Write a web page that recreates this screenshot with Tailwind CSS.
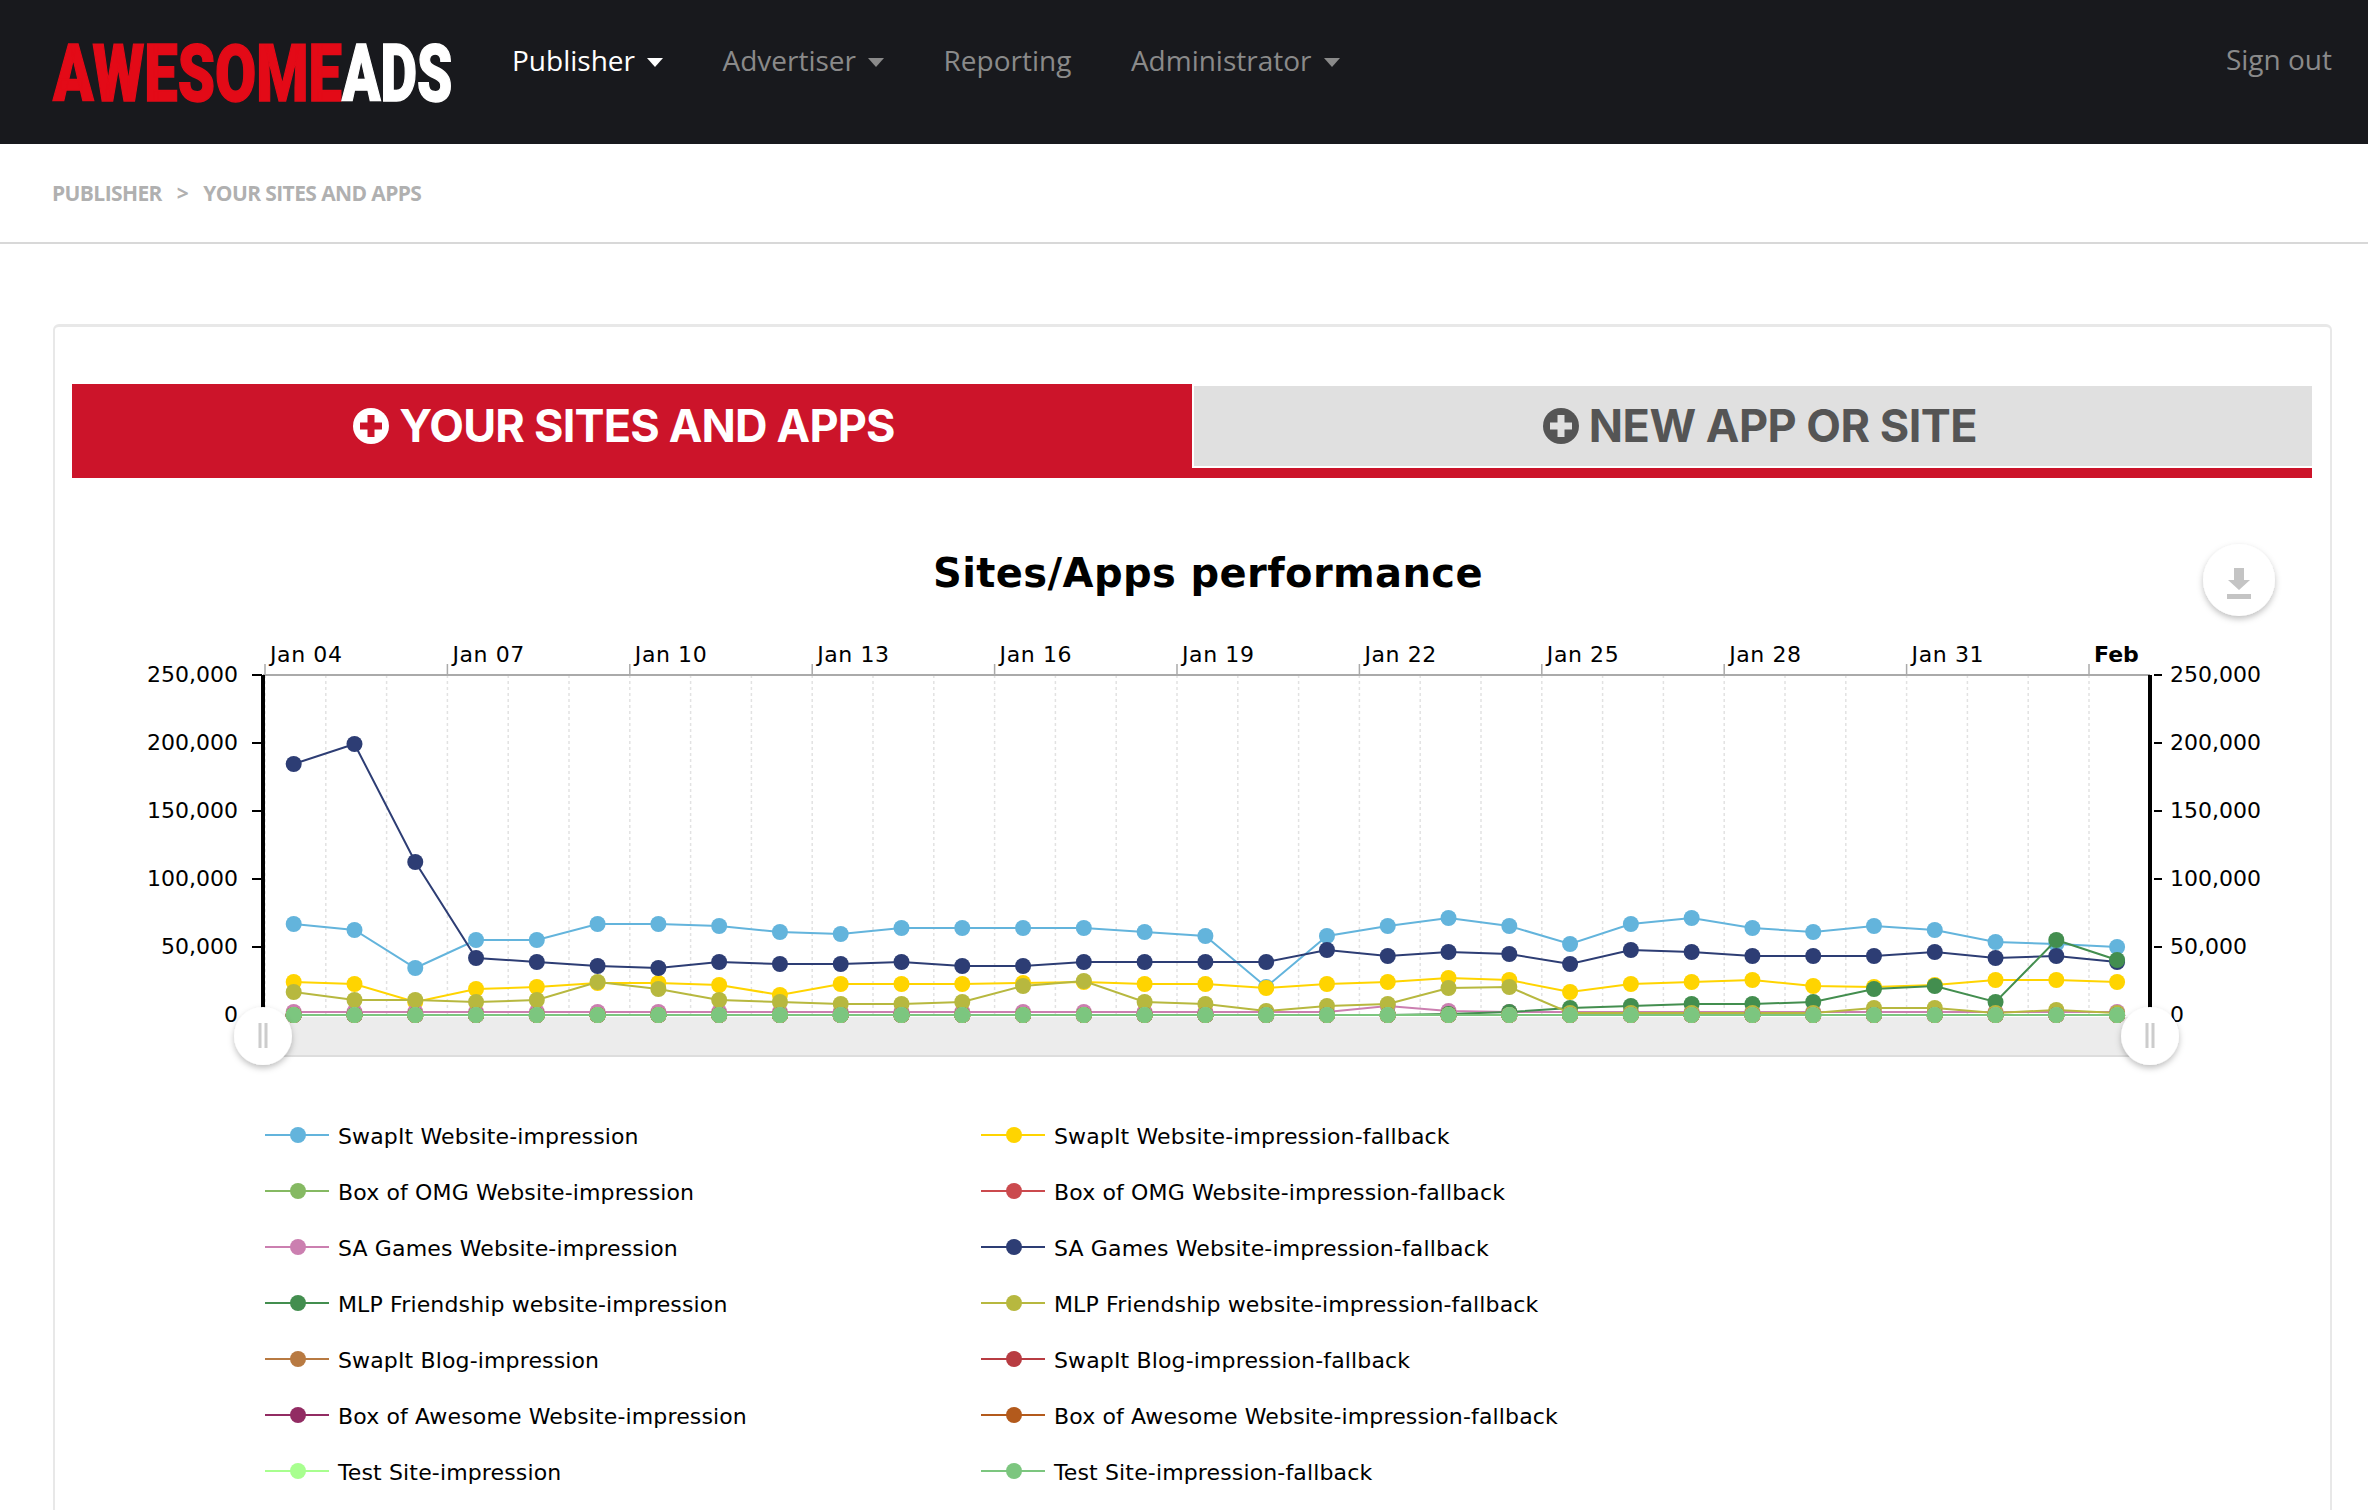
<!DOCTYPE html>
<html lang="en">
<head>
  <meta charset="UTF-8">
  <title>Your sites and apps</title>
  <script src="https://cdn.jsdelivr.net/npm/@tailwindcss/browser@4"></script>
</head>
<body class="bg-white h-[1510px] overflow-hidden font-['Open_Sans',sans-serif]">

  <!-- Top bar -->
  <header class="h-[144px] bg-[#18191d] flex items-start pl-[53px] pr-[36px]">
    <svg class="mt-[44px] w-[400px] h-[58px] shrink-0 overflow-visible" viewBox="0 0 400 58" font-family="Roboto" font-weight="900" font-size="79" stroke-width="1.5">
      <text transform="translate(0 57) scale(0.755 1)" fill="#e30a17" stroke="#e30a17">AWESOME</text>
      <text transform="translate(289 57) scale(0.715 1)" fill="#ffffff" stroke="#ffffff">ADS</text>
    </svg>
    <nav class="ml-[59px] flex gap-[59.5px] mt-[41px] text-[28px] leading-[38px] text-[#8a8a8a]">
      <a class="flex items-center text-white">Publisher<span class="ml-[12px] mt-[4px] border-x-[8px] border-t-[9px] border-x-transparent border-t-white"></span></a>
      <a class="flex items-center">Advertiser<span class="ml-[12px] mt-[4px] border-x-[8px] border-t-[9px] border-x-transparent border-t-[#8a8a8a]"></span></a>
      <a class="flex items-center">Reporting</a>
      <a class="flex items-center">Administrator<span class="ml-[12px] mt-[4px] border-x-[8px] border-t-[9px] border-x-transparent border-t-[#8a8a8a]"></span></a>
    </nav>
    <a class="ml-auto mt-[40px] text-[28px] leading-[38px] text-[#8a8a8a]">Sign out</a>
  </header>

  <!-- Breadcrumb -->
  <div class="h-[100px] border-b-2 border-[#d8d8d8] pl-[52px] pt-[35px] flex items-start gap-[15px] text-[21px] leading-[28px] font-bold tracking-[-0.6px] text-[#b0b0b0]">
    <span>PUBLISHER</span>
    <span>&gt;</span>
    <span>YOUR SITES AND APPS</span>
  </div>

  <!-- Card -->
  <main class="mt-[80px] ml-[53px] w-[2279px] h-[1200px] border-2 border-t-[3px] border-[#e8e8e8] rounded-[6px] pt-[57px] pl-[17px]">
    <div class="w-[2240px] h-[94px] flex items-start border-b-[10px] border-[#cc142a] font-['Inter',sans-serif] font-bold text-[45px]">
      <button class="w-[1120px] h-[84px] pr-[16px] bg-[#cc142a] text-white tracking-[-0.8px] flex items-center justify-center gap-[10px]">
        <svg class="w-[36px] h-[36px]" viewBox="0 0 36 36"><circle cx="18" cy="18" r="18" fill="#ffffff"/><path d="M14.5 7h7v7.5H29v7h-7.5V29h-7v-7.5H7v-7h7.5z" fill="#cc142a"/></svg>
        YOUR SITES AND APPS
      </button>
      <button class="w-[1118px] ml-[2px] mt-[2px] h-[80px] pl-[14px] bg-[#e0e0e0] text-[#555555] tracking-[-0.5px] flex items-center justify-center gap-[10px]">
        <svg class="w-[36px] h-[36px]" viewBox="0 0 36 36"><circle cx="18" cy="18" r="18" fill="#555555"/><path d="M14.5 7h7v7.5H29v7h-7.5V29h-7v-7.5H7v-7h7.5z" fill="#e0e0e0"/></svg>
        NEW APP OR SITE
      </button>
    </div>

    <!-- Chart: the viewBox uses page coordinates -->
    <svg id="chart" class="block" width="2240" height="630" viewBox="72 478 2240 630" font-family="DejaVu Sans" font-size="22">
      <defs>
        <filter id="soft" x="-30%" y="-30%" width="160%" height="170%">
          <feDropShadow dx="0" dy="3" stdDeviation="3" flood-color="#000000" flood-opacity="0.25"/>
        </filter>
      </defs>
      <text x="1208" y="587" text-anchor="middle" font-weight="700" font-size="40" letter-spacing="0.4">Sites/Apps performance</text>
      <circle cx="2239" cy="580" r="36" fill="#ffffff" filter="url(#soft)"/>
      <path d="M2234 568h10v12h6l-11 10-11-10h6zM2227 594h24v5h-24z" fill="#c4c4c4"/>
      <g id="grid"></g>
      <rect x="263" y="1017" width="1887" height="40" fill="#ececec"/>
      <rect x="263" y="1055" width="1887" height="2" fill="#dddddd"/>
      <g id="series"></g>
      <circle cx="263" cy="1036" r="29" fill="#ffffff" filter="url(#soft)"/>
      <path d="M260 1023v25M266 1023v25" stroke="#cccccc" stroke-width="3"/>
      <circle cx="2150" cy="1036" r="29" fill="#ffffff" filter="url(#soft)"/>
      <path d="M2147 1023v25M2153 1023v25" stroke="#cccccc" stroke-width="3"/>
    </svg>

    <!-- Legend -->
    <ul id="legend" class="ml-[193px] grid grid-cols-[716px_716px] auto-rows-[56px] font-['DejaVu_Sans',sans-serif] text-[22px] tracking-[0.14px] text-black"></ul>
  </main>

  <script>
    // y positions on the page for each of the 31 days, legend order
    const flat = y => Array(31).fill(y);
    const seriesList = [
      { name: 'SwapIt Website-impression', color: '#63b4dc', ys: [924,930,968,940,940,924,924,926,932,934,928,928,928,928,932,936,987,936,926,918,926,944,924,918,928,932,926,930,942,944,947] },
      { name: 'SwapIt Website-impression-fallback', color: '#ffd400', ys: [982,984,1002,989,987,983,983,985,995,984,984,984,983,982,984,984,988,984,982,978,980,992,984,982,980,986,987,985,980,980,982] },
      { name: 'Box of OMG Website-impression', color: '#85b962', ys: flat(1015) },
      { name: 'Box of OMG Website-impression-fallback', color: '#cb4a4e', ys: flat(1015) },
      { name: 'SA Games Website-impression', color: '#cb7fb0', ys: [1012,1012,1012,1012,1012,1012,1012,1012,1012,1012,1012,1012,1012,1012,1012,1012,1012,1012,1006,1011,1012,1012,1012,1012,1012,1012,1012,1012,1012,1012,1012] },
      { name: 'SA Games Website-impression-fallback', color: '#2d3d74', ys: [764,744,862,958,962,966,968,962,964,964,962,966,966,962,962,962,962,950,956,952,954,964,950,952,956,956,956,952,958,956,962] },
      { name: 'MLP Friendship website-impression', color: '#438e4f', ys: [1015,1015,1015,1015,1015,1015,1015,1015,1015,1015,1015,1015,1015,1015,1015,1015,1015,1015,1015,1014,1012,1008,1006,1004,1004,1002,989,986,1002,940,960] },
      { name: 'MLP Friendship website-impression-fallback', color: '#b7b83f', ys: [992,1000,1000,1002,1000,982,989,1000,1002,1004,1004,1002,986,981,1002,1004,1011,1006,1004,988,987,1013,1013,1013,1013,1013,1008,1008,1013,1010,1013] },
      { name: 'SwapIt Blog-impression', color: '#b87a42', ys: flat(1015) },
      { name: 'SwapIt Blog-impression-fallback', color: '#b83c42', ys: flat(1015) },
      { name: 'Box of Awesome Website-impression', color: '#922c63', ys: flat(1015) },
      { name: 'Box of Awesome Website-impression-fallback', color: '#b35a1c', ys: flat(1015) },
      { name: 'Test Site-impression', color: '#a8ff8f', ys: flat(1015) },
      { name: 'Test Site-impression-fallback', color: '#7cc67f', ys: flat(1015) }
    ];

    const NS = 'http://www.w3.org/2000/svg';
    function add(parent, tag, attrs, text) {
      const el = document.createElementNS(NS, tag);
      for (const key in attrs) el.setAttribute(key, attrs[key]);
      if (text) el.textContent = text;
      parent.appendChild(el);
      return el;
    }

    // --- Axes and grid ---
    const grid = document.getElementById('grid');
    for (let i = 0; i < 31; i++) {
      const x = 265 + i * 60.8;
      add(grid, 'line', { x1: x, y1: 675, x2: x, y2: 1015, stroke: '#e2e2e2', 'stroke-width': 1.5, 'stroke-dasharray': '3 3' });
    }
    ['Jan 04','Jan 07','Jan 10','Jan 13','Jan 16','Jan 19','Jan 22','Jan 25','Jan 28','Jan 31','Feb'].forEach((label, i) => {
      const x = 265 + i * 182.4;
      const isFeb = label === 'Feb';
      add(grid, 'line', { x1: x, y1: 664, x2: x, y2: 675, stroke: '#aaaaaa', 'stroke-width': 1.5 });
      add(grid, 'text', { x: x + 5, y: 662, 'font-weight': isFeb ? 700 : 400, 'letter-spacing': isFeb ? 0 : 0.6 }, label);
    });
    add(grid, 'rect', { x: 263, y: 674, width: 1887, height: 2, fill: '#aaaaaa' });
    add(grid, 'rect', { x: 261, y: 675, width: 4, height: 340, fill: '#000000' });
    add(grid, 'rect', { x: 2148, y: 675, width: 4, height: 340, fill: '#000000' });
    ['250,000','200,000','150,000','100,000','50,000','0'].forEach((label, i) => {
      const y = 675 + i * 68;
      if (i < 5) {
        add(grid, 'rect', { x: 252, y: y - 1, width: 10, height: 2, fill: '#000000' });
        add(grid, 'rect', { x: 2154, y: y - 1, width: 8, height: 2, fill: '#000000' });
      }
      add(grid, 'text', { x: 238, y: y + 7, 'text-anchor': 'end' }, label);
      add(grid, 'text', { x: 2170, y: y + 7 }, label);
    });

    // --- Series and legend ---
    const holder = document.getElementById('series');
    const legend = document.getElementById('legend');
    seriesList.forEach(s => {
      const pts = s.ys.map((y, i) => [293.7 + i * 60.78, y]);
      add(holder, 'polyline', { points: pts.map(p => p.join(',')).join(' '), fill: 'none', stroke: s.color, 'stroke-width': 2 });
      pts.forEach(p => add(holder, 'circle', { cx: p[0], cy: p[1], r: 8, fill: s.color }));

      const li = document.createElement('li');
      li.className = 'flex items-center gap-[9px]';
      li.innerHTML = '<svg width="64" height="20" viewBox="0 0 64 20"><path d="M0 9h64" stroke="' + s.color + '" stroke-width="2"/><circle cx="33" cy="9" r="8" fill="' + s.color + '"/></svg><span>' + s.name + '</span>';
      legend.appendChild(li);
    });
  </script>
</body>
</html>
